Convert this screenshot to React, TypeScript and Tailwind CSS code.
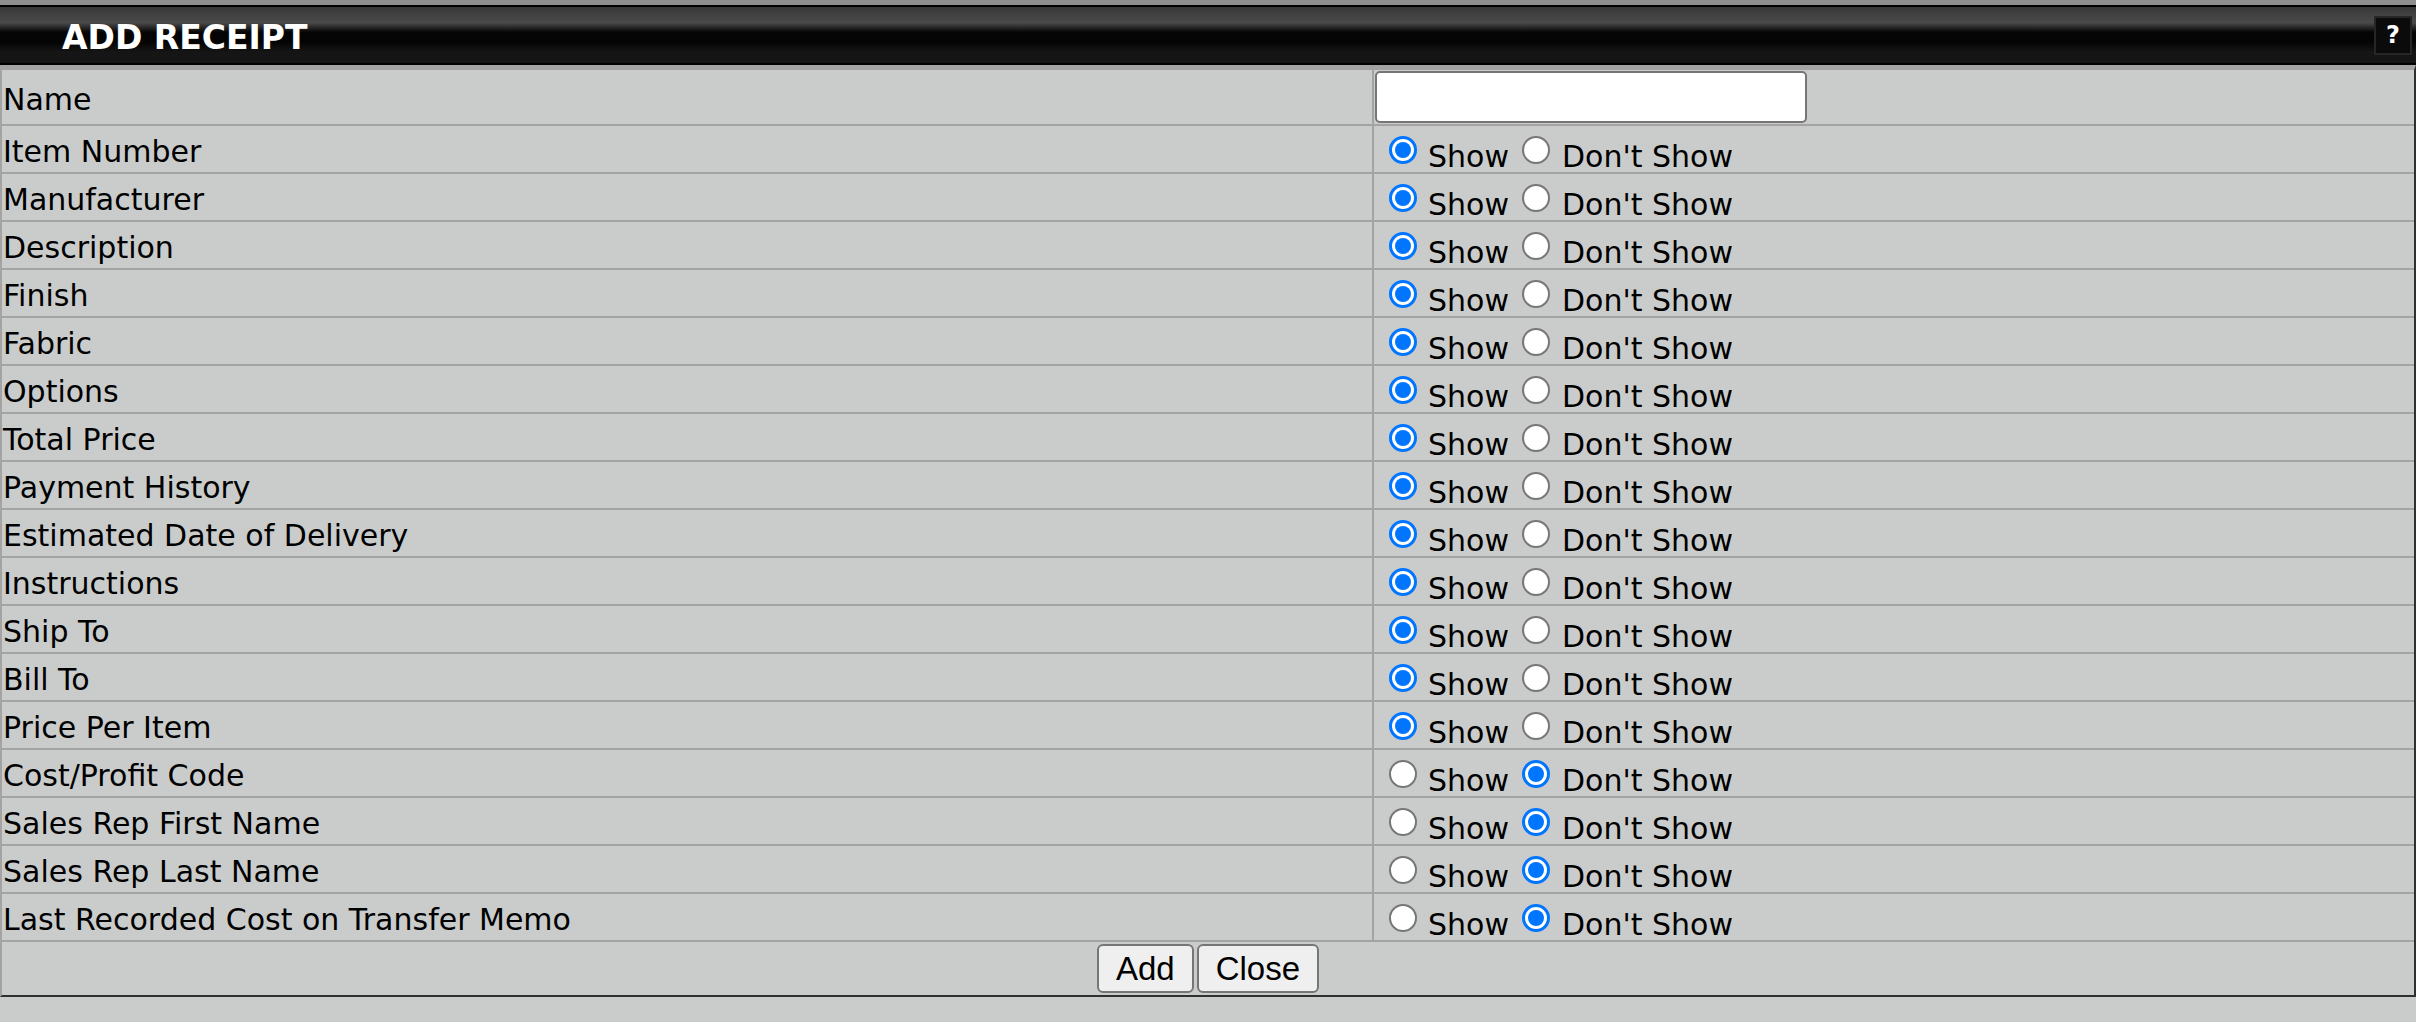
import * as React from 'react';

type Row = { label: string; show: boolean };

const rows: Row[] = [
  { label: 'Item Number', show: true },
  { label: 'Manufacturer', show: true },
  { label: 'Description', show: true },
  { label: 'Finish', show: true },
  { label: 'Fabric', show: true },
  { label: 'Options', show: true },
  { label: 'Total Price', show: true },
  { label: 'Payment History', show: true },
  { label: 'Estimated Date of Delivery', show: true },
  { label: 'Instructions', show: true },
  { label: 'Ship To', show: true },
  { label: 'Bill To', show: true },
  { label: 'Price Per Item', show: true },
  { label: 'Cost/Profit Code', show: false },
  { label: 'Sales Rep First Name', show: false },
  { label: 'Sales Rep Last Name', show: false },
  { label: 'Last Recorded Cost on Transfer Memo', show: false },
];

function Radio({ checked, onClick }: { checked: boolean; onClick: () => void }) {
  if (checked) {
    return (
      <span
        onClick={onClick}
        className="mb-3 flex h-[28px] w-[28px] shrink-0 items-center justify-center rounded-full border-[3px] border-[#0075ff] bg-white"
      >
        <span className="h-[16px] w-[16px] rounded-full bg-[#0075ff]" />
      </span>
    );
  }
  return (
    <span
      onClick={onClick}
      className="mb-3 h-[28px] w-[28px] shrink-0 rounded-full border-2 border-[#767676] bg-white"
    />
  );
}

export default function App() {
  const [values, setValues] = React.useState<boolean[]>(rows.map(r => r.show));
  const [name, setName] = React.useState('');

  const setValue = (i: number, v: boolean) => {
    const next = [...values];
    next[i] = v;
    setValues(next);
  };

  return (
    <div className="min-h-screen bg-[#cacccb] font-['DejaVu_Sans',sans-serif] text-[30px] text-black">
      {/* top strip */}
      <div className="h-[5px] bg-[#8f8f8f]" />

      {/* title bar */}
      <div className="flex h-[60px] items-center justify-between border-y-2 border-black bg-[linear-gradient(to_bottom,#383838_0%,#4a4a4a_28%,#050505_45%,#040404_62%,#151515_80%,#151515_100%)] pr-[4px] pl-[62px]">
        <span className="pt-1 text-[33px] leading-none font-bold text-white">ADD RECEIPT</span>
        <span className="flex h-[39px] w-[38px] items-center justify-center border-2 border-[#262626] bg-[#0b0b0b] text-[24px] leading-none font-bold text-white">
          ?
        </span>
      </div>

      {/* form table */}
      <div className="border-t-[5px] border-r-2 border-b-2 border-l-2 border-t-[#a3a3a3] border-r-[#2f2f2f] border-b-[#2f2f2f] border-l-[#a3a3a3]">
        {/* Name */}
        <div className="flex h-[56px] border-b-2 border-[#a3a3a3]">
          <div className="flex w-[1372px] shrink-0 items-center border-r-2 border-[#a3a3a3] pt-[5px] pl-[1px]">
            Name
          </div>
          <div className="flex items-start pt-[1px] pl-[1px]">
            <input
              value={name}
              onChange={e => setName(e.target.value)}
              className="h-[52px] w-[432px] rounded-[5px] border-2 border-[#767676] bg-white px-2 outline-none"
            />
          </div>
        </div>

        {rows.map((row, i) => (
          <div key={row.label} className="flex h-[48px] border-b-2 border-[#a3a3a3]">
            <div className="flex w-[1372px] shrink-0 items-center border-r-2 border-[#a3a3a3] pt-[5px] pl-[1px]">
              {row.label}
            </div>
            <div className="flex items-center pt-[14px] pl-[15px]">
              <Radio checked={values[i]} onClick={() => setValue(i, true)} />
              <span className="ml-[11px]">Show</span>
              <span className="ml-[13px] flex items-center">
                <Radio checked={!values[i]} onClick={() => setValue(i, false)} />
              </span>
              <span className="ml-[12px]">Don't Show</span>
            </div>
          </div>
        ))}

        {/* Buttons */}
        <div className="flex h-[53px] items-start justify-center gap-[3px] pt-[2px] font-['Liberation_Sans',Arial,sans-serif] text-[33px]">
          <button className="h-[49px] rounded-[6px] border-2 border-[#767676] bg-[#efefef] px-[17px] leading-none text-black">
            Add
          </button>
          <button className="h-[49px] rounded-[6px] border-2 border-[#767676] bg-[#efefef] px-[17px] leading-none text-black">
            Close
          </button>
        </div>
      </div>
    </div>
  );
}
